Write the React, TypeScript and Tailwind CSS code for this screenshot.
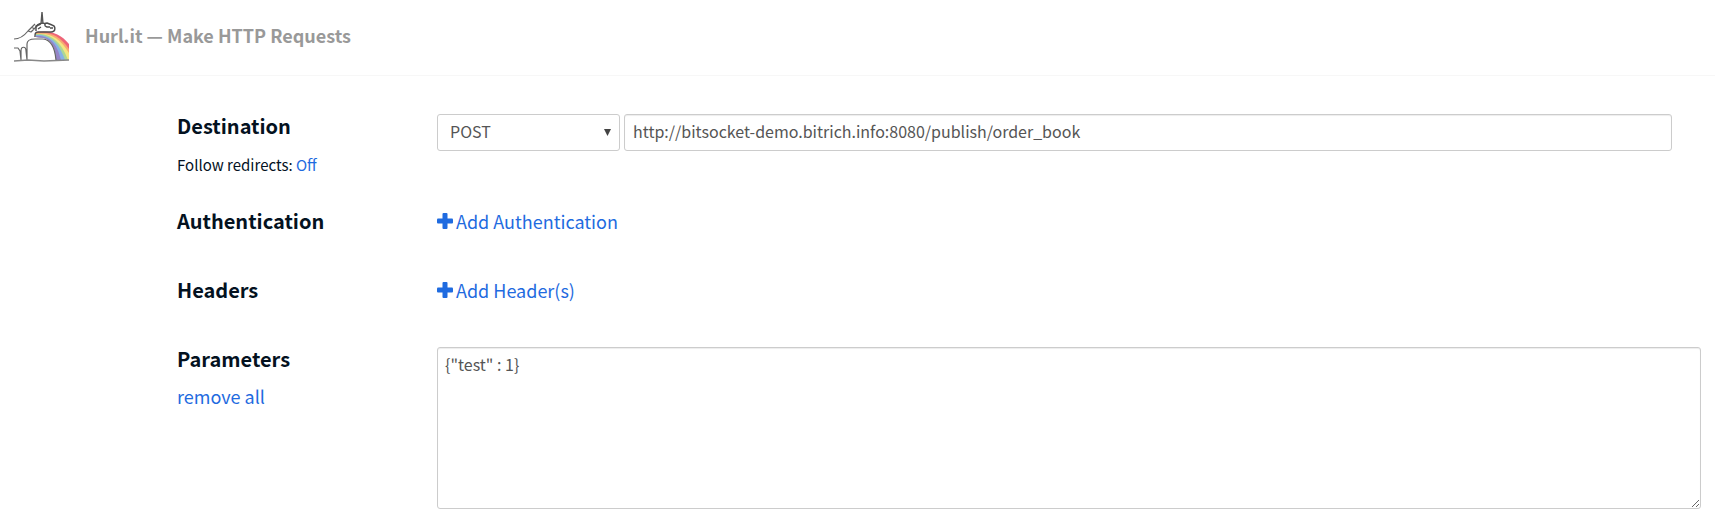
import React from "react";

function UnicornLogo() {
  return (
    <svg className="h-14 w-14 shrink-0" viewBox="0 0 56 56" fill="none" aria-label="Hurl.it unicorn" role="img">
      {/* rainbow, outermost band first */}
      <path d="M22 22 C36 20 46 23 55 34 V50 H42 C42 40 38 30 30 28 L22 27Z" fill="#ee6478" />
      <path d="M22 23 C36 21 46 26 55 39 V50 H42 C42 40 38 30 30 28 L22 27Z" fill="#f7a971" />
      <path d="M22 24 C36 22 46 28 55 43 V50 H42 C42 40 38 30 30 28 L22 27Z" fill="#f3e681" />
      <path d="M22 24 C35 23 47 30 54 50 H42 C42 40 38 30 30 28 L22 27Z" fill="#acd795" />
      <path d="M22 25 C34 24 45 31 51 50 H42 C42 40 38 30 30 28 L22 27Z" fill="#86b2e6" />
      <path d="M22 26 C33 25 43 31 47 50 H42 C42 40 38 30 30 28 L22 27Z" fill="#9484c6" />
      {/* body, legs and ground */}
      <path d="M0 29 C6 29 10 26 14 21 L21 14 M14 21 L17 22 L24 15 M18 17 L20 19 M13 50 L13 34 C13 30 16 29 21 29 H29 C38 30 41 39 42 50 M0 38 H4 L6 41 L7 50 M7 50 V41 C7 36 12 36 12 41 L13 50" stroke="#666" strokeWidth="1.2" strokeLinejoin="round" />
      <path d="M0 51 L14 50 L30 51 L55 50" stroke="#888" strokeWidth="1.3" />
      {/* horn and head */}
      <path d="M27 14 L28 2 L29 14" stroke="#555" strokeWidth="1.4" />
      <path d="M21 27 C21 24 21 22 24 22 H37 C42 22 42 16 38 15 L33 13 C30 13 30 16 33 17 L36 17 M23 15 C26 13 30 13 32 14 M22 21 L22 16 L27 14 M36 18 L39 18 M24 19 L27 17" stroke="#4d4d4d" strokeWidth="1.4" strokeLinejoin="round" />
    </svg>
  );
}

function PlusIcon() {
  return (
    <svg className="h-4 w-4 shrink-0" viewBox="0 0 16 16" fill="currentColor" aria-hidden="true">
      <rect x="0" y="5.5" width="16" height="5" rx="1" />
      <rect x="5.5" y="0" width="5" height="16" rx="1" />
    </svg>
  );
}

function AddButton({ children }: { children: React.ReactNode }) {
  return (
    <button type="button" className="flex cursor-pointer items-center gap-[3px] text-lg leading-7 text-[#1f6be0]">
      <PlusIcon />
      {children}
    </button>
  );
}

function Heading({ children }: { children: React.ReactNode }) {
  return <h2 className="text-xl leading-7 font-bold text-[#04121f]">{children}</h2>;
}

const row = "grid grid-cols-[260px_minmax(0,1fr)] items-start";
const field =
  "rounded-[3px] border border-[#cccccc] bg-white text-base text-[#555555] shadow-[inset_0_1px_1px_rgba(0,0,0,0.075)] outline-none";

export default function App() {
  return (
    <div className="min-h-screen bg-white font-['Noto_Sans_CJK_SC','Open_Sans',sans-serif] text-[#04121f]">
      <header className="flex h-[76px] items-center gap-[15px] border-b border-[#f7f7f7] px-3.5">
        <UnicornLogo />
        <h1 className="pb-1.5 text-lg leading-7 font-bold text-[#999999]">Hurl.it — Make HTTP Requests</h1>
      </header>
      <form className="flex flex-col pt-9 pr-3.5 pb-4 pl-[177px]">
        <section className={row}>
          <div>
            <Heading>Destination</Heading>
            <p className="mt-[13px] text-[15px] leading-6">
              Follow redirects:{" "}
              <a href="#redirects" className="text-[#1f6be0]">Off</a>
            </p>
          </div>
          <div className="flex gap-1 pt-0.5 pr-[29px]">
            <div className="relative w-[183px] shrink-0">
              <select aria-label="Method" defaultValue="POST" className="h-[37px] w-full appearance-none rounded-[3px] border border-[#cccccc] bg-white pb-[3px] pl-3 text-base text-[#555555] outline-none">
                <option>GET</option>
                <option>POST</option>
                <option>PUT</option>
                <option>DELETE</option>
              </select>
              <svg className="pointer-events-none absolute top-[15px] right-[9px] h-[7px] w-[7px]" viewBox="0 0 7 7" fill="#444" aria-hidden="true">
                <path d="M0 0H7L3.5 7Z" />
              </svg>
            </div>
            <input aria-label="URL" type="text" defaultValue="http://bitsocket-demo.bitrich.info:8080/publish/order_book" className={field + " h-[37px] min-w-0 flex-1 px-2 pb-[3px]"} />
          </div>
        </section>
        <section className={row + " mt-[30px]"}>
          <Heading>Authentication</Heading>
          <AddButton>Add Authentication</AddButton>
        </section>
        <section className={row + " mt-[41px]"}>
          <Heading>Headers</Heading>
          <AddButton>Add Header(s)</AddButton>
        </section>
        <section className={row + " mt-[41px]"}>
          <div>
            <Heading>Parameters</Heading>
            <a href="#remove" className="mt-[9px] block text-lg leading-7 text-[#1f6be0]">remove all</a>
          </div>
          <div className="flex pt-0.5">
            <textarea aria-label="Parameters" defaultValue={'{"test" : 1}'} className={field + " h-[162px] w-full resize px-[7px] py-1 leading-6"} />
          </div>
        </section>
      </form>
    </div>
  );
}
